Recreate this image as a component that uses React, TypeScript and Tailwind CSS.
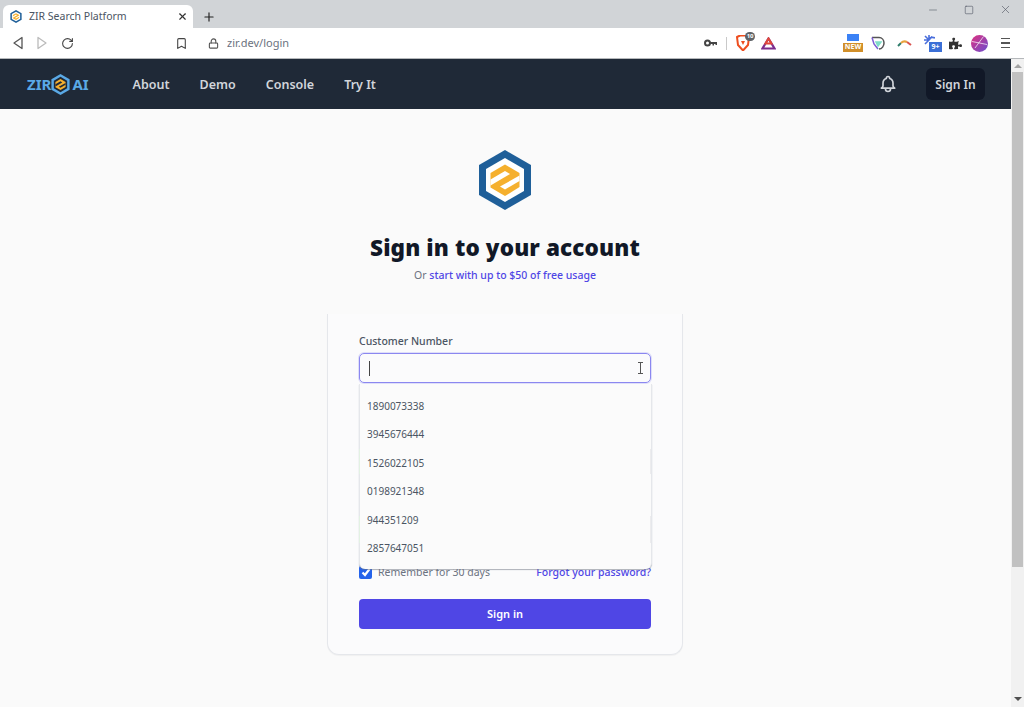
import { Bookmark, Lock, Minus, Plus, RotateCw, Square, X } from "lucide-react";
import { FaPuzzlePiece } from "react-icons/fa";
import { HiOutlineBell } from "react-icons/hi";

const CUSTOMERS = [
	"1890073338",
	"3945676444",
	"1526022105",
	"0198921348",
	"944351209",
	"2857647051",
];

const NAV_LINKS = ["About", "Demo", "Console", "Try It"];

function HexLogo({
	className,
	ring,
	inner,
}: {
	className: string;
	ring: string;
	inner: string;
}) {
	return (
		<svg className={className} viewBox="0 0 52 60">
			<path d="M26 0L52 15V45L26 60L0 45V15Z" fill={ring} />
			<path d="M26 8L45 19V41L26 52L7 41V19Z" fill={inner} />
			<path d="M26 14.5L40.5 23V37L26 46L11.5 37.5V23Z" fill="#f5b02e" />
			{/* The two slits that turn the inner hexagon into a Z */}
			<path d="M11.5 29.5L26 21L31 24L11.5 35.4Z" fill={inner} />
			<path d="M40.5 31L26 39.5L21 36.6L40.5 25.5Z" fill={inner} />
		</svg>
	);
}

function TriangleArrow({ flip, color }: { flip?: boolean; color: string }) {
	return (
		<svg
			className={`h-[14px] w-[12px] ${flip ? "rotate-180" : ""}`}
			fill="none"
			stroke={color}
			strokeLinejoin="round"
			strokeWidth="1.3"
			viewBox="0 0 12 14"
		>
			<path d="M10 1.5V12.5L2 7Z" />
		</svg>
	);
}

function BrowserChrome() {
	return (
		<div className="shrink-0 border-[#b5b8bb] border-b">
			{/* Tab strip */}
			<div className="flex h-[28px] items-end bg-[#d1d4d7] pl-[3px]">
				<div className="flex h-[23px] w-[190px] items-center rounded-t-md bg-white pr-[5px] pl-[7px]">
					<HexLogo className="h-[13px] w-[12px]" inner="#ffffff" ring="#1f5f99" />
					<span className="ml-[7px] flex-1 text-[#4b5563] text-[10.5px]">
						ZIR Search Platform
					</span>
					<X className="h-[11px] w-[11px] text-[#333333]" strokeWidth={2.5} />
				</div>
				<Plus className="mb-[4px] ml-[9px] h-[14px] w-[14px] text-[#222222]" strokeWidth={2} />
				<div className="mb-[12px] ml-auto flex items-center gap-[25px] pr-[12px] text-[#555a66]">
					<Minus className="h-[12px] w-[12px]" strokeWidth={1.2} />
					<Square className="h-[10px] w-[10px]" strokeWidth={1.5} />
					<X className="h-[13px] w-[13px]" strokeWidth={1.2} />
				</div>
			</div>

			{/* Toolbar */}
			<div className="flex h-[30px] items-center bg-white">
				<div className="ml-[12px] flex items-center">
					<TriangleArrow color="#555555" />
					<div className="ml-[12px]">
						<TriangleArrow color="#bbbbbb" flip />
					</div>
					<RotateCw className="ml-[13px] h-[13px] w-[13px] text-[#444444]" strokeWidth={2} />
				</div>
				<Bookmark className="ml-[101px] h-[13px] w-[13px] text-[#444444]" strokeWidth={2} />
				<Lock className="ml-[20px] h-[11px] w-[11px] text-[#555555]" strokeWidth={2.4} />
				<span className="ml-[8px] text-[#6b7280] text-[11px]">zir.dev/login</span>

				<div className="ml-[415px] flex items-center">
					<svg className="h-[8px] w-[13px]" fill="none" viewBox="0 0 13 8">
						<circle cx="3.5" cy="4" r="2.5" stroke="#444444" strokeWidth="2" />
						<path d="M6 3H13V6H11.5V5H10V6.5H8.5V5H6Z" fill="#444444" />
					</svg>
					<div className="ml-[9px] h-[13px] w-px bg-[#c9c9c9]" />
					{/* Brave shield + badge */}
					<div className="relative ml-[9px] h-[16px] w-[14px]">
						<svg className="h-[16px] w-[14px]" viewBox="0 0 14 16">
							<path d="M1 2L4 0.5H10L13 2L12 10L7 15.5L2 10Z" fill="none" stroke="#ee4e1f" strokeWidth="2" />
							<path d="M5 6H9L7 10Z" fill="#ee4e1f" />
						</svg>
						<span className="absolute top-[-3px] left-[9px] flex h-[9px] w-[10px] items-center justify-center rounded-full bg-[#5f6368] font-bold text-[6px] text-white">
							10
						</span>
					</div>
					<svg className="ml-[11px] h-[13px] w-[15px]" viewBox="0 0 15 13">
						<path d="M7.5 1.5L13.5 11.5H1.5Z" fill="none" stroke="#7c2d8e" strokeWidth="2.2" />
						<path d="M7.5 1.5L10.5 6.5H4.5Z" fill="none" stroke="#e0483a" strokeWidth="2" />
					</svg>
				</div>

				<div className="ml-[67px] flex items-center">
					<div className="relative h-[18px] w-[20px]">
						<div className="absolute top-0 left-[4px] h-[7px] w-[12px] bg-[#3b82f6]" />
						<span className="absolute bottom-0 left-0 flex h-[9px] w-[20px] items-center justify-center bg-[#d18f2a] font-bold text-[7px] text-white">
							NEW
						</span>
					</div>
					<svg className="ml-[8px] h-[14px] w-[14px]" fill="none" strokeWidth="1.5" viewBox="0 0 14 14">
						<path d="M1 1.5H8C11 1.5 13 4 13 7C13 10 11 13 8 13" stroke="#555555" />
						<path d="M1 1.5L3 8L7 13" stroke="#7c5cd6" />
						<path d="M5 6L10 6L7 10Z" fill="#7fdcc8" stroke="#7fdcc8" />
					</svg>
					<svg className="ml-[12px] h-[8px] w-[15px]" fill="none" strokeWidth="2" viewBox="0 0 15 8">
						<path d="M1 7L4 4" stroke="#2e7d6b" />
						<path d="M4 4C6 2 8 2 10 3" stroke="#e8a33d" />
						<path d="M10 3L14 6" stroke="#d9534f" />
					</svg>
					<div className="relative ml-[11px] h-[18px] w-[18px]">
						<svg className="h-[12px] w-[12px]" fill="none" stroke="#4a6fdc" strokeWidth="1.6" viewBox="0 0 12 12">
							<path d="M6 6L6 1M6 6L1 6M6 6L2 2M6 6L9 2.5M6 6L2 10M7 4C9 3 10 3 12 4" />
						</svg>
						<span className="absolute right-[-1px] bottom-0 flex h-[10px] w-[13px] items-center justify-center bg-[#3b6fd6] font-bold text-[7px] text-white">
							9+
						</span>
					</div>
					<FaPuzzlePiece className="ml-[8px] h-[13px] w-[13px] text-[#333333]" />
					<svg className="ml-[9px] h-[17px] w-[17px]" viewBox="0 0 17 17">
						<defs>
							<linearGradient id="avatar" x1="0" x2="1" y1="0" y2="1">
								<stop offset="0" stopColor="#e0307f" />
								<stop offset="1" stopColor="#6a4fd0" />
							</linearGradient>
						</defs>
						<circle cx="8.5" cy="8.5" r="8.5" fill="url(#avatar)" />
						<path d="M1 6.5L16 9.5M4 13L12.5 1.5" fill="none" stroke="#ffffff" strokeWidth="0.7" />
					</svg>
					<div className="ml-[13px] flex flex-col gap-[3px]">
						<div className="h-[1.5px] w-[9px] bg-[#555555]" />
						<div className="h-[1.5px] w-[9px] bg-[#555555]" />
						<div className="h-[1.5px] w-[9px] bg-[#555555]" />
					</div>
				</div>
			</div>
		</div>
	);
}

function NavBar() {
	return (
		<nav className="flex h-[50px] shrink-0 items-center bg-[#1f2937] pr-[26px] pl-[27px]">
			<div className="flex items-center font-bold text-[#5aa9e6] text-[15px]">
				<span>ZIR</span>
				<HexLogo className="mr-[2px] h-[21px] w-[19px]" inner="#1f2937" ring="#5aa9e6" />
				<span>AI</span>
			</div>
			<div className="ml-[44px] flex items-center gap-[30px] pt-[2px] font-semibold text-[#d1d5db] text-[12.5px]">
				{NAV_LINKS.map((link) => (
					<span key={link}>{link}</span>
				))}
			</div>
			<HiOutlineBell className="ml-auto h-[20px] w-[20px] text-[#d1d5db]" />
			<button
				className="ml-[28px] h-[32px] w-[59px] rounded-md bg-[#111827] pt-px font-semibold text-[#d1d5db] text-[12px]"
				type="button"
			>
				Sign In
			</button>
		</nav>
	);
}

function CustomerDropdown() {
	return (
		<div className="absolute top-[70px] left-[31px] z-10 h-[185px] w-[293px] rounded-b-md border-[#e5e7eb] border-x bg-[#fbfbfb] pt-[8px] shadow-[0_1px_1px_rgba(107,114,128,0.55)]">
			<div className="absolute top-[65px] left-[-1px] h-[25px] w-px bg-[#e3f2e3]" />
			<div className="absolute top-[132px] left-[-1px] h-[27px] w-px bg-[#e3f2e3]" />
			<div className="absolute top-[65px] right-0 h-[25px] w-px bg-[#ececee]" />
			<div className="absolute top-[132px] right-0 h-[27px] w-px bg-[#ececee]" />
			{CUSTOMERS.map((customer) => (
				<div className="flex h-[28.5px] items-center pl-[7px] text-[#4b5563] text-[10px]" key={customer}>
					{customer}
				</div>
			))}
		</div>
	);
}

function LoginCard() {
	return (
		<div className="relative mt-[32px] h-[341px] w-[356px] rounded-b-xl border-[#e5e7eb] border-x border-b bg-[#fbfbfc] px-[31px] pt-[20px] shadow-[0_1px_1px_rgba(0,0,0,0.04)]">
			<label className="block font-medium text-[#4b5563] text-[10.5px] leading-[14px]" htmlFor="customer">
				Customer Number
			</label>
			<div className="relative mt-[5px] flex h-[30px] items-center rounded-[5px] border border-[#8b87f0] pl-[9px] shadow-[0_0_0_1px_rgba(99,102,241,0.18)]">
				<div className="h-[15px] w-px bg-[#444444]" />
				<svg className="absolute top-[8px] right-[6px] h-[12px] w-[7px]" fill="none" stroke="#555555" strokeWidth="1" viewBox="0 0 7 12">
					<path d="M1 0.5H6M1 11.5H6M3.5 0.5V11.5" />
				</svg>
			</div>
			<CustomerDropdown />

			{/* Fields hidden behind the open list */}
			<div className="mt-[64px] h-[30px] rounded-md border border-[#d1d5db]" />
			<div className="mt-[40px] h-[30px] rounded-md border border-[#d1d5db]" />

			<div className="mt-[18px] flex items-center justify-between text-[10.5px] leading-[14px]">
				<div className="flex items-center">
					<div className="flex h-[13px] w-[13px] items-center justify-center rounded-[2px] bg-[#2563eb]">
						<svg className="h-[10px] w-[10px]" fill="none" stroke="#ffffff" strokeWidth="2.2" viewBox="0 0 10 10">
							<path d="M1.5 5.5L4 8L8.5 2" />
						</svg>
					</div>
					<span className="ml-[6px] text-[#6b7280]">Remember for 30 days</span>
				</div>
				<span className="font-medium text-[#4f46e5]">Forgot your password?</span>
			</div>

			<button
				className="mt-[20px] h-[30px] w-full rounded-[4px] bg-[#4f46e5] font-semibold text-[11px] text-white"
				type="button"
			>
				Sign in
			</button>
		</div>
	);
}

function Scrollbar() {
	return (
		<div className="flex w-[13px] shrink-0 flex-col items-center bg-[#f1f1f1]">
			<div className="mt-[5px] h-0 w-0 border-x-[4px] border-x-transparent border-b-[4px] border-b-[#a3a3a3]" />
			<div className="mt-[4px] h-[495px] w-[11px] bg-[#c1c1c1]" />
			<div className="mt-[130px] h-0 w-0 border-x-[4px] border-x-transparent border-t-[4px] border-t-[#505050]" />
		</div>
	);
}

export default function App() {
	return (
		<div className="flex h-[707px] w-[1024px] flex-col overflow-hidden bg-[#fafafa] font-['Noto_Sans',sans-serif]">
			<BrowserChrome />
			<div className="flex min-h-0 flex-1">
				<div className="flex min-w-0 flex-1 flex-col">
					<NavBar />
					<main className="flex flex-1 flex-col items-center pt-[41px] pr-px">
						<HexLogo className="h-[60px] w-[52px]" inner="#ffffff" ring="#1f5f99" />
						<h1 className="mt-[23px] font-black text-[#111827] text-[22.5px] tracking-[0.12px] leading-[30px]">
							Sign in to your account
						</h1>
						<p className="mt-[5px] text-[#6b7280] text-[10.5px] leading-[14px]">
							Or <span className="font-medium text-[#4f46e5]">start with up to $50 of free usage</span>
						</p>
						<LoginCard />
					</main>
				</div>
				<Scrollbar />
			</div>
		</div>
	);
}
